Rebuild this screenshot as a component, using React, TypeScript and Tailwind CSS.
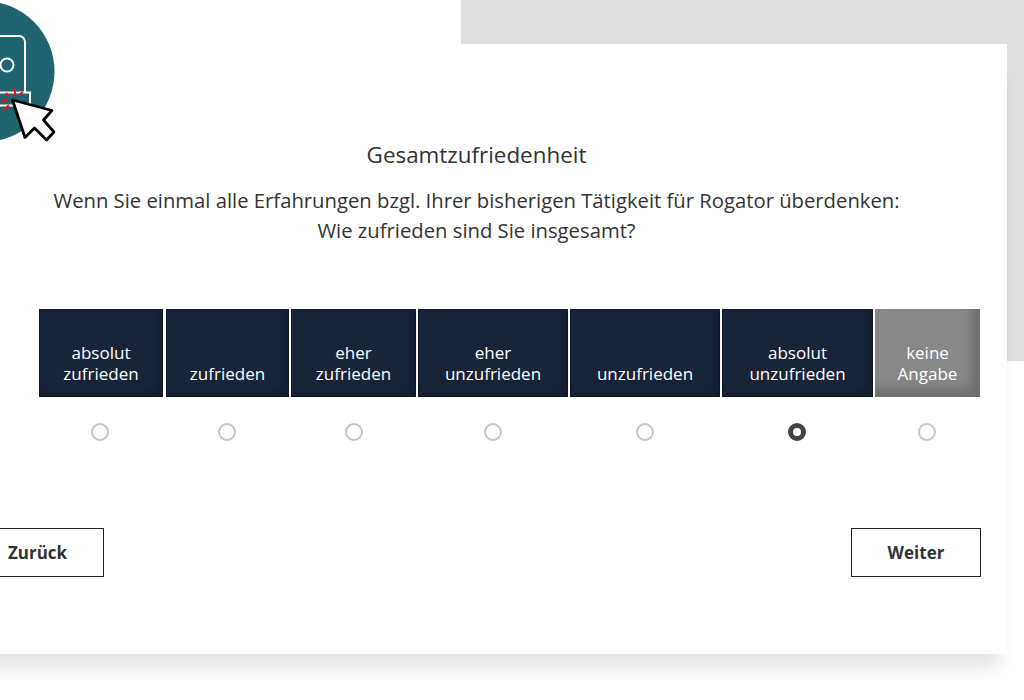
import React from 'react';

const OPTIONS = [
  { lines: ['absolut', 'zufrieden'], radioClass: 'pr-[3px]' },
  { lines: ['zufrieden'], radioClass: 'pr-[1px]' },
  { lines: ['eher', 'zufrieden'], radioClass: '' },
  { lines: ['eher', 'unzufrieden'], radioClass: '' },
  { lines: ['unzufrieden'], radioClass: '' },
  { lines: ['absolut', 'unzufrieden'], radioClass: 'pr-[1px]', selected: true },
  { lines: ['keine', 'Angabe'], radioClass: 'pr-[1px]', muted: true },
];

function Logo() {
  return (
    <svg className="absolute left-0 top-0" width="60" height="145" viewBox="0 0 60 145">
      <circle cx="-15.800" cy="71.500" r="70.300" fill="#1f6470" />
      <path d="M-10 36H19a6 6 0 0 1 6 6V92" fill="none" stroke="#fff" strokeWidth="2" />
      <circle cx="7" cy="65" r="6.500" fill="none" stroke="#fff" strokeWidth="2" />
      <path d="M-5 92.500H30V105.500H-5" fill="none" stroke="#fff" strokeWidth="2" />
      <g stroke="#ff0a14" strokeWidth="2">
        <path d="M15 88V95M6 93l4 3.500M23 92l-4 3M2 100.500H8M4 110l5-5" />
      </g>
      <path
        d="M12.500 100L52 110.500L43.500 120L54 132L46.500 140L34.500 128L25 137.500Z"
        fill="#fff"
        stroke="#000"
        strokeWidth="2.800"
        strokeLinejoin="round"
      />
    </svg>
  );
}

export default function App() {
  return (
    <div className="relative h-[700px] w-[1024px] overflow-hidden bg-white font-['Open_Sans',sans-serif] text-[#333]">
      <div className="absolute right-0 top-0 h-[361px] w-[563px] bg-[#dfdfdf]" />

      {/* card runs past the left edge of the window, like the Zurück button */}
      <div className="relative ml-[-40px] mt-[44px] h-[610px] w-[1047px] bg-white pl-[40px] shadow-[0_22px_16px_-8px_rgba(0,0,0,0.11)]">
        <div className="w-[953px] pt-[96px] text-center">
          <h1 className="text-[22.400px] font-normal leading-[30px]">Gesamtzufriedenheit</h1>
          <p className="mt-[15px] text-[20.250px] leading-[30px]">
            Wenn Sie einmal alle Erfahrungen bzgl. Ihrer bisherigen Tätigkeit für Rogator überdenken:
            <br />
            Wie zufrieden sind Sie insgesamt?
          </p>
        </div>

        <div className="ml-[39px] mt-[64px] grid w-[941px] grid-cols-[125px_123px_125px_150px_150px_151px_105px] gap-x-[2px]">
          {OPTIONS.map((option, index) => (
            <div
              key={option.lines.join(' ')}
              className={`flex h-[88px] flex-col items-center justify-end pb-[13px] text-[17px] leading-[21px] text-white ${
                index === 0 ? 'mr-[1px] ' : ''
              }${
                option.muted
                  ? 'bg-[#888888] shadow-[inset_-8px_-8px_12px_rgba(0,0,0,0.2)]'
                  : 'bg-[#182539] shadow-[inset_0_0_0_1px_rgba(0,0,0,0.25),inset_-6px_-4px_12px_rgba(0,0,0,0.2)]'
              }`}
            >
              {option.lines.map((line) => (
                <span key={line}>{line}</span>
              ))}
            </div>
          ))}
          {OPTIONS.map((option) => (
            <div key={option.lines.join(' ')} className={`flex justify-center pt-[26px] ${option.radioClass}`}>
              <span
                className={`h-[18px] w-[18px] rounded-full bg-white ${
                  option.selected ? 'border-[5px] border-[#444]' : 'border-2 border-[#c6c6c6]'
                }`}
              />
            </div>
          ))}
        </div>

        <div className="ml-[-27px] mt-[87px] flex w-[1008px] justify-between">
          <button className="h-[49px] w-[131px] border border-[#222] bg-white pr-[2px] text-[17px] font-bold text-[#333]">
            Zurück
          </button>
          <button className="h-[49px] w-[130px] border border-[#222] bg-white text-[17px] font-bold text-[#333]">
            Weiter
          </button>
        </div>
      </div>

      <Logo />
    </div>
  );
}
